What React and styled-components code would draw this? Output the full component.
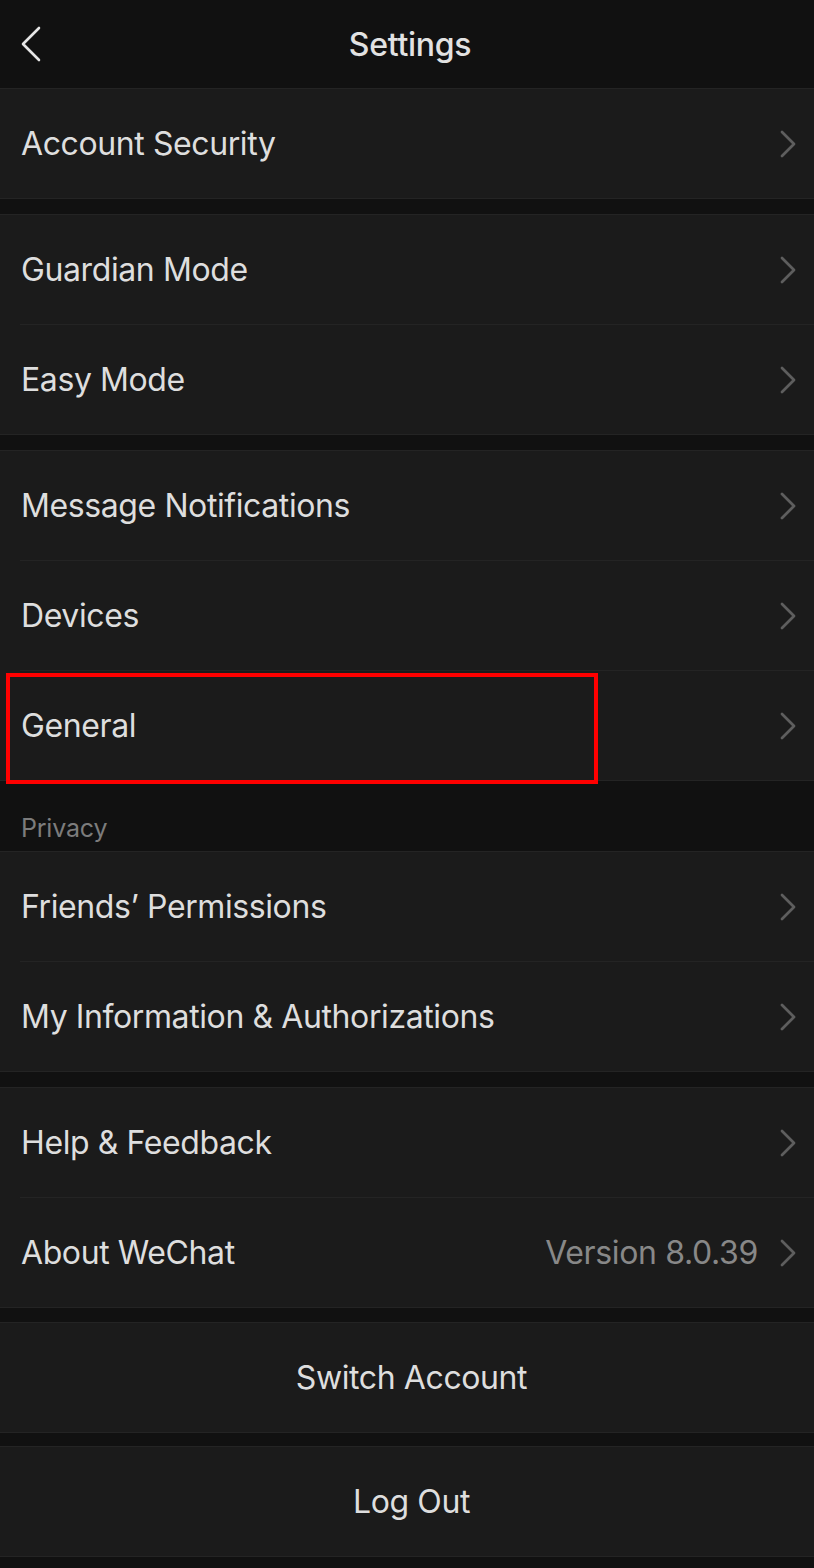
import React from "react";
import styled, { createGlobalStyle } from "styled-components";

const Global = createGlobalStyle`
  html, body { margin: 0; padding: 0; background: #111111; }
  body { font-family: Inter, "Noto Sans", "Liberation Sans", sans-serif; -webkit-font-smoothing: antialiased; }
  * { box-sizing: border-box; }
`;

const Page = styled.div`
  width: 814px;
  min-height: 1568px;
  background: #111111;
  display: flex;
  flex-direction: column;
`;

const Header = styled.header`
  height: 88px;
  display: grid;
  grid-template-columns: 80px 1fr 80px;
  align-items: center;
  background: #111111;
`;

const BackButton = styled.button`
  background: none;
  border: none;
  padding: 0 0 0 20px;
  height: 40px;
  display: flex;
  align-items: center;
  cursor: pointer;
`;

const Title = styled.h1`
  margin: 0;
  text-align: center;
  font-size: 32px;
  font-weight: 500;
  color: #e2e2e2;
  letter-spacing: -0.3px;
  padding-left: 6px;
`;

const Group = styled.section`
  background: #1b1b1b;
  border-top: 1px solid #242424;
  border-bottom: 1px solid #242424;
  margin-bottom: ${(p) => p.$gap || 0}px;
`;

const Row = styled.div`
  position: relative;
  height: 109px;
  display: flex;
  align-items: center;
  padding: 0 18px 0 21px;
  & + & {
    margin-top: 1px;
  }
  & + &::before {
    content: "";
    position: absolute;
    top: -1px;
    left: 20px;
    right: 0;
    height: 1px;
    background: #242424;
  }
`;

const Label = styled.span`
  flex: 1;
  font-size: 32px;
  color: #dedede;
  letter-spacing: -0.4px;
`;

const Value = styled.span`
  font-size: 32px;
  color: #888888;
  letter-spacing: -0.35px;
  margin-right: 22px;
`;

const CenterLabel = styled.span`
  flex: 1;
  text-align: center;
  font-size: 32px;
  color: #dedede;
  letter-spacing: -0.4px;
  padding-left: 6px;
`;

const SectionTitle = styled.div`
  height: 70px;
  padding: 32px 21px 0;
  font-size: 25px;
  color: #7c7c7c;
  letter-spacing: -0.2px;
`;

const Highlight = styled.div`
  position: absolute;
  left: 6px;
  top: 2px;
  width: 592px;
  height: 111px;
  border: 4px solid #ff0000;
  pointer-events: none;
`;

const Chevron = () => (
  <svg width="16" height="28" viewBox="0 0 16 28" fill="none">
    <path d="M2 2 L14 14 L2 26" stroke="#5e5e5e" strokeWidth="2.8" strokeLinecap="round" strokeLinejoin="round" />
  </svg>
);

const BackIcon = () => (
  <svg width="22" height="36" viewBox="0 0 22 36" fill="none">
    <path d="M19 2 L3 18 L19 34" stroke="#e6e6e6" strokeWidth="2.6" strokeLinecap="round" strokeLinejoin="round" />
  </svg>
);

const NavRow = ({ label, value, highlight }) => (
  <Row>
    <Label>{label}</Label>
    {value && <Value>{value}</Value>}
    <Chevron />
    {highlight && <Highlight />}
  </Row>
);

export default function App() {
  return (
    <Page>
      <Global />
      <Header>
        <BackButton aria-label="Back">
          <BackIcon />
        </BackButton>
        <Title>Settings</Title>
        <span />
      </Header>

      <Group $gap={15}>
        <NavRow label="Account Security" />
      </Group>

      <Group $gap={15}>
        <NavRow label="Guardian Mode" />
        <NavRow label="Easy Mode" />
      </Group>

      <Group>
        <NavRow label="Message Notifications" />
        <NavRow label="Devices" />
        <NavRow label="General" highlight />
      </Group>

      <SectionTitle>Privacy</SectionTitle>

      <Group $gap={15}>
        <NavRow label="Friends’ Permissions" />
        <NavRow label="My Information & Authorizations" />
      </Group>

      <Group $gap={14}>
        <NavRow label="Help & Feedback" />
        <NavRow label="About WeChat" value="Version 8.0.39" />
      </Group>

      <Group $gap={13}>
        <Row>
          <CenterLabel>Switch Account</CenterLabel>
        </Row>
      </Group>

      <Group>
        <Row>
          <CenterLabel>Log Out</CenterLabel>
        </Row>
      </Group>
    </Page>
  );
}
